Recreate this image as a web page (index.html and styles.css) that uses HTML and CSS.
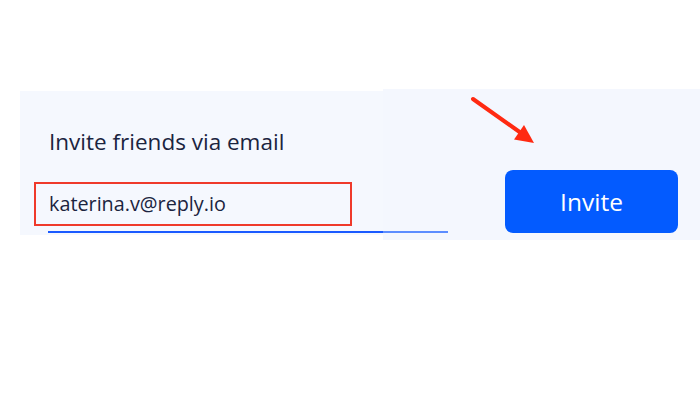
FILE: index.html
```html
<!DOCTYPE html>
<html lang="en">
<head>
    <meta charset="UTF-8">
    <title>Invite friends</title>
    <link rel="stylesheet" href="styles.css">
</head>
<body>
    <div class="stage">
        <div class="panel panel-left">
            <h2 class="title">Invite friends via email</h2>
            <div class="field">katerina.v@reply.io</div>
            <div class="mark-box"></div>
        </div>

        <div class="panel panel-right">
            <div class="line-stub"></div>
            <button class="invite-btn" type="button">Invite</button>
            <svg class="mark-arrow" width="68" height="50" viewBox="0 0 68 50">
                <line x1="3" y1="4" x2="51" y2="38" stroke="#ff2a12" stroke-width="4" stroke-linecap="round"/>
                <polygon points="64,48 44,44.5 54,30" fill="#ff2a12"/>
            </svg>
        </div>
    </div>
</body>
</html>
```

FILE: styles.css
```css
:root {
    --text: #1b2440;
    --blue: #035bff;
    --line: #1a5aff;
    --mark: #ef3a2b;
}

* {
    margin: 0;
    padding: 0;
    box-sizing: border-box;
    font-family: 'Open Sans', 'Noto Sans', sans-serif;
}

body {
    background: #fff;
    width: 700px;
    height: 400px;
    overflow: hidden;
}

.stage {
    display: flex;
    align-items: flex-start;
    padding-left: 20px;
}

.panel {
    position: relative;
}

.panel-left {
    width: 363px;
    height: 144px;
    margin-top: 91px;
    padding: 36px 0 2px;
    background: #f5f8fe;
}

.title {
    padding-left: 29px;
    font-size: 22.5px;
    line-height: 30px;
    font-weight: 400;
    color: var(--text);
}

.field {
    margin: 34px 0 0 28px;
    padding: 0 0 14px 1px;
    border-bottom: 2px solid var(--line);
    font-size: 19.8px;
    line-height: 26px;
    color: var(--text);
}

/* красная рамка-пометка поверх поля */
.mark-box {
    position: absolute;
    left: 14px;
    top: 91px;
    width: 318px;
    height: 44px;
    border: 2px solid var(--mark);
}

.panel-right {
    width: 317px;
    height: 151px;
    margin-top: 89px;
    padding: 81px 22px 7px 0;
    background: #f4f7fe;
    display: flex;
    align-items: flex-end;
}

.line-stub {
    width: 65px;
    height: 2px;
    background: #5c8dff;
}

.invite-btn {
    margin-left: auto;
    width: 173px;
    height: 63px;
    background: var(--blue);
    color: #fff;
    border: none;
    border-radius: 8px;
    font-size: 24.5px;
    font-weight: 400;
}

.mark-arrow {
    position: absolute;
    left: 87px;
    top: 6px;
}
```
